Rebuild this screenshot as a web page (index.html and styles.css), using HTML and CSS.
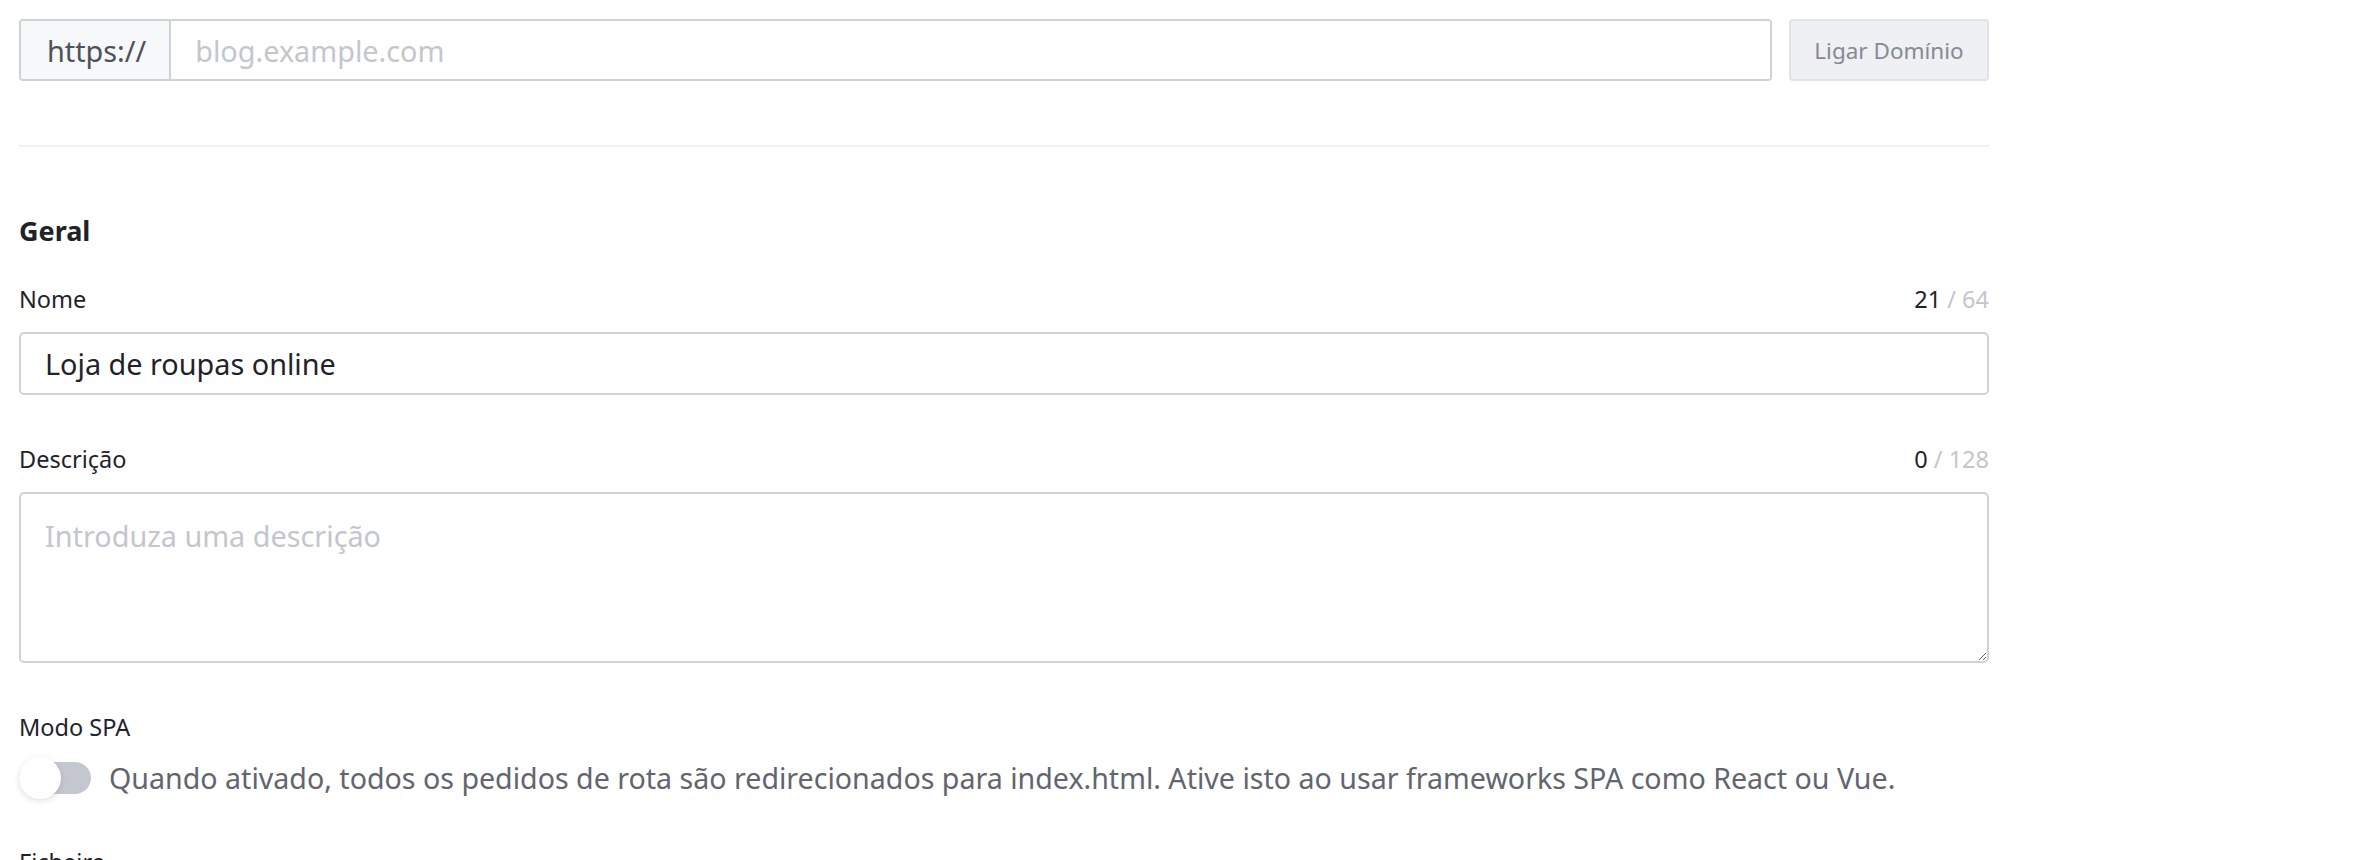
FILE: index.html
```html
<!DOCTYPE html>
<html lang="pt">
<head>
    <meta charset="UTF-8">
    <meta name="viewport" content="width=device-width, initial-scale=1.0">
    <title>Definições do site</title>
    <link rel="stylesheet" href="styles.css">
</head>
<body>
    <div class="settings">
        <!-- domínio personalizado -->
        <div class="domain-row">
            <div class="input-group">
                <span class="addon">https://</span>
                <input type="text" class="addon-input" placeholder="blog.example.com">
            </div>
            <button type="button" class="btn-bind">Ligar Domínio</button>
        </div>

        <hr class="divider">

        <h2 class="section-title">Geral</h2>

        <div class="form-item">
            <div class="item-head">
                <label for="siteName">Nome</label>
                <span class="counter"><span class="count-now">21</span> / 64</span>
            </div>
            <input type="text" id="siteName" class="text-input" value="Loja de roupas online">
        </div>

        <div class="form-item">
            <div class="item-head">
                <label for="siteDesc">Descrição</label>
                <span class="counter"><span class="count-now">0</span> / 128</span>
            </div>
            <textarea id="siteDesc" class="text-area" placeholder="Introduza uma descrição"></textarea>
        </div>

        <div class="form-item">
            <div class="item-head">
                <label>Modo SPA</label>
            </div>
            <div class="switch-row">
                <span class="switch"><span class="switch-knob"></span></span>
                <span class="switch-desc">Quando ativado, todos os pedidos de rota são redirecionados para index.html. Ative isto ao usar frameworks SPA como React ou Vue.</span>
            </div>
        </div>

        <div class="form-item">
            <div class="item-head">
                <label>Ficheiro</label>
            </div>
        </div>
    </div>
</body>
</html>
```

FILE: styles.css
```css
/* base */
body {
    margin: 0;
    font-family: "Noto Sans", "Open Sans", sans-serif;
    color: #1f2329;
    background-color: #fff;
}

.settings {
    width: 1970px;
    padding: 19px 0 0 19px;
}

/* linha do domínio */
.domain-row {
    display: flex;
    gap: 17px;
    height: 62px;
}

.input-group {
    flex: 1;
    display: flex;
    border: 2px solid #cfd2d8;
    border-radius: 4px;
    overflow: hidden;
}

.addon {
    display: flex;
    align-items: center;
    padding: 0 23px 0 26px;
    background-color: #f7f8fa;
    border-right: 2px solid #cfd2d8;
    color: #4e5159;
    font-size: 28.8px;
}

.addon-input {
    flex: 1;
    border: none;
    outline: none;
    padding: 0 24px;
    font-family: inherit;
    font-size: 28.8px;
    color: #1f2329;
}

::placeholder {
    color: #c3c6cc;
}

.btn-bind {
    width: 200px;
    border: 2px solid #e1e3e7;
    border-radius: 4px;
    background-color: #eef0f3;
    color: #868a93;
    font-family: inherit;
    font-size: 22.5px;
    cursor: pointer;
}

.divider {
    border: none;
    border-top: 2px solid #f0f1f3;
    margin: 64px 0 0;
}

.section-title {
    font-size: 27px;
    font-weight: 700;
    line-height: 36px;
    margin: 66px 0 0;
}

/* campos */
.form-item {
    margin-top: 35px;
}

.form-item + .form-item {
    margin-top: 49px;
}

.item-head {
    display: flex;
    justify-content: space-between;
    align-items: baseline;
    font-size: 23.5px;
    line-height: 30px;
    margin-bottom: 18px;
}

.counter {
    color: #c3c6cc;
}

.count-now {
    color: #1f2329;
}

.text-input,
.text-area {
    display: block;
    box-sizing: border-box;
    width: 100%;
    border: 2px solid #cfd2d8;
    border-radius: 5px;
    padding: 0 24px;
    font-family: inherit;
    font-size: 28.8px;
    color: #1f2329;
    outline: none;
}

.text-input {
    height: 63px;
}

.text-area {
    height: 171px;
    padding: 22px 24px;
    line-height: 40px;
}

/* interruptor */
.switch-row {
    display: flex;
    align-items: center;
    gap: 18px;
    margin-top: -2px;
}

.switch {
    position: relative;
    flex: none;
    width: 72px;
    height: 32px;
    border-radius: 16px;
    background-color: #c4c7d0;
}

.switch-knob {
    position: absolute;
    left: 0;
    top: -5px;
    width: 42px;
    height: 42px;
    border-radius: 50%;
    background-color: #fff;
    box-shadow: 0 2px 6px rgba(0, 0, 0, 0.12);
}

.switch-desc {
    font-size: 28.6px;
    line-height: 40px;
    color: #62656d;
}
```
